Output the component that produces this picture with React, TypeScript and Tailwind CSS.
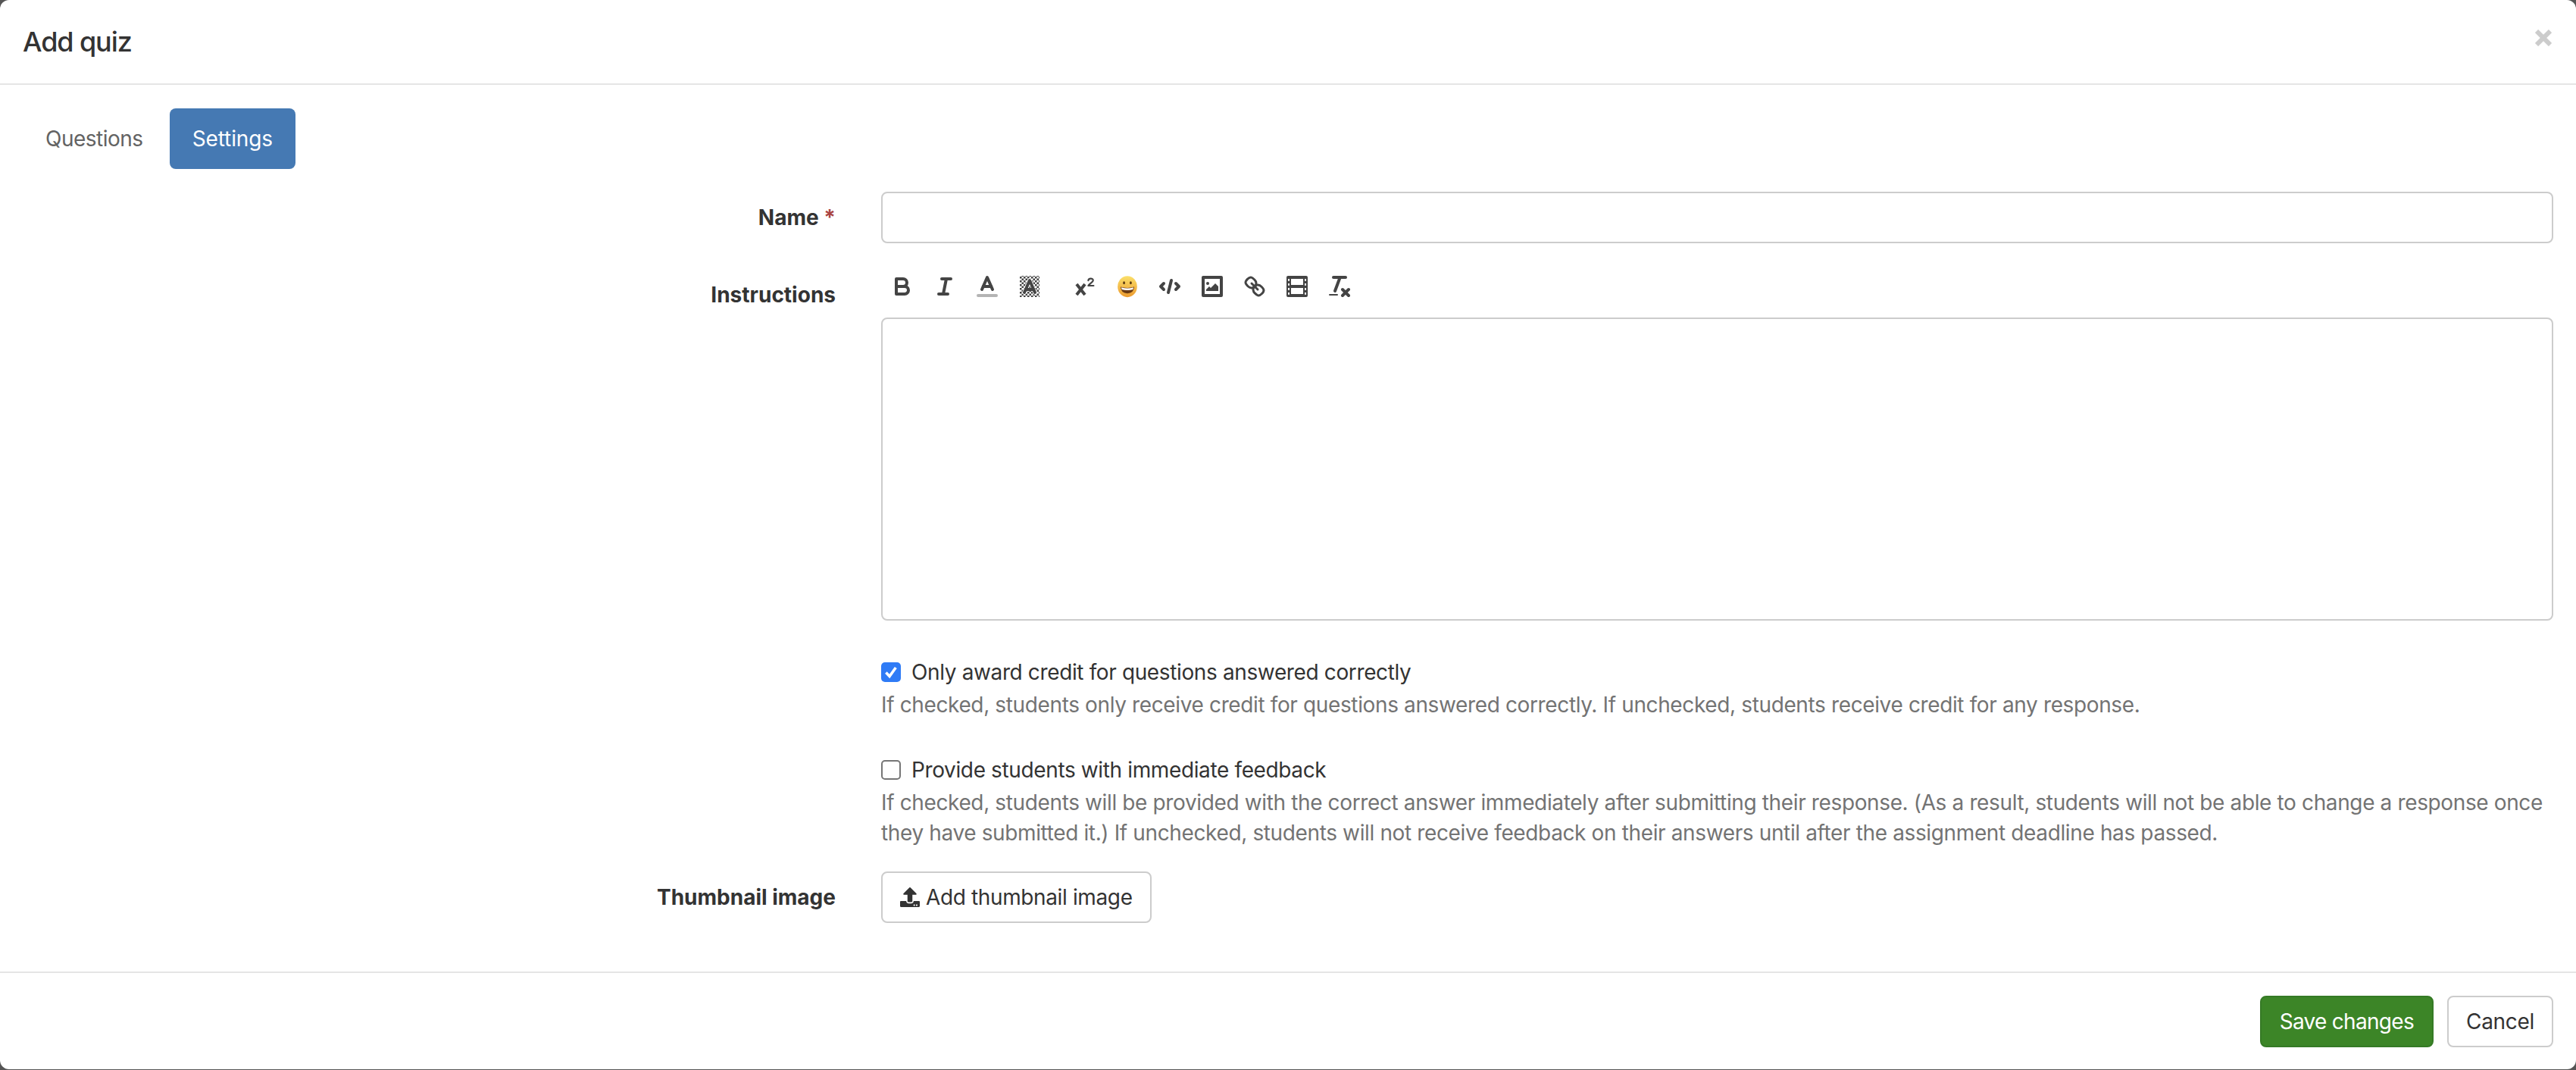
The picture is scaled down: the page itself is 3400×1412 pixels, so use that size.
import { FaUpload } from 'react-icons/fa';

const font = "font-['Inter','Noto_Sans',sans-serif]";

const Bold = () => (
  <>
    <path d="M5,4H9.5A2.5,2.5,0,0,1,12,6.5v0A2.5,2.5,0,0,1,9.5,9H5A0,0,0,0,1,5,9V4A0,0,0,0,1,5,4Z" />
    <path d="M5,9h5.5A2.5,2.5,0,0,1,13,11.5v0A2.5,2.5,0,0,1,10.5,14H5a0,0,0,0,1,0,0V9A0,0,0,0,1,5,9Z" />
  </>
);

const Italic = () => (
  <>
    <line x1="7" x2="13" y1="4" y2="4" />
    <line x1="5" x2="11" y1="14" y2="14" />
    <line x1="8" x2="10" y1="14" y2="4" />
  </>
);

const Color = () => (
  <>
    <line x1="3" x2="15" y1="15" y2="15" opacity="0.4" />
    <polyline points="5.5 11 9 3 12.5 11" />
    <line x1="11.63" x2="6.38" y1="9" y2="9" />
  </>
);

const Background = () => (
  <>
    <defs>
      <pattern id="checker" width="2.5" height="2.5" patternUnits="userSpaceOnUse">
        <rect width="1.25" height="1.25" fill="#444" stroke="none" />
        <rect x="1.25" y="1.25" width="1.25" height="1.25" fill="#444" stroke="none" />
      </pattern>
    </defs>
    <rect x="2.5" y="2" width="13" height="14" fill="url(#checker)" stroke="none" />
    <polyline points="5.5 13 9 5 12.5 13" stroke="#fff" strokeWidth="2.8" />
    <polyline points="5.5 13 9 5 12.5 13" />
    <line x1="11.63" x2="6.38" y1="11" y2="11" />
  </>
);

const Script = () => (
  <>
    <path d="M3.5 7.5 L9 14.5 M9 7.5 L3.5 14.5" strokeLinecap="butt" />
    <path d="M11.2 5.1 C11.3 3.4 14.4 3.3 14.4 5 C14.4 6.3 12 7 11.2 8.5 H14.7" strokeWidth="1.1" />
  </>
);

const Emoji = () => (
  <>
    <defs>
      <linearGradient id="face" x1="0" x2="0" y1="0" y2="1">
        <stop offset="0" stopColor="#fbe06a" />
        <stop offset="1" stopColor="#ec9a2e" />
      </linearGradient>
    </defs>
    <ellipse cx="9" cy="9.1" rx="6.4" ry="7" fill="url(#face)" stroke="none" />
    <ellipse cx="6.8" cy="6.6" rx="0.7" ry="1" fill="#5a3a12" stroke="none" />
    <ellipse cx="11.2" cy="6.6" rx="0.7" ry="1" fill="#5a3a12" stroke="none" />
    <path d="M4.5 9.3 Q9 10.6 13.5 9.3 Q13.2 13.6 9 13.6 Q4.8 13.6 4.5 9.3 Z" fill="#6b3a12" stroke="none" />
    <path d="M5 9.6 Q9 10.8 13 9.6 L12.7 11 Q9 11.9 5.3 11 Z" fill="#fff" stroke="none" />
  </>
);

const Code = () => (
  <>
    <polyline points="5 7 3 9 5 11" />
    <polyline points="13 7 15 9 13 11" />
    <line x1="10" x2="8" y1="5" y2="13" />
  </>
);

const ImageIcon = () => (
  <>
    <rect x="3" y="3" width="12" height="12" />
    <circle cx="6" cy="7" r="1" fill="#444" stroke="none" />
    <polyline points="5 12 5 11 7 9 8 10 11 7 13 9 13 12 5 12" fill="#444" stroke="none" />
  </>
);

const LinkIcon = () => (
  <g strokeWidth="1.5">
    <line x1="7" x2="11" y1="7" y2="11" />
    <path d="M8.9,4.577a3.476,3.476,0,0,1,.36,4.679A3.476,3.476,0,0,1,4.577,8.9C3.185,7.5,2.035,6.4,4.217,4.217S7.5,3.185,8.9,4.577Z" />
    <path d="M13.423,9.1a3.476,3.476,0,0,0-4.679-.36,3.476,3.476,0,0,0,.36,4.679c1.392,1.392,2.5,2.542,4.679.36S14.815,10.5,13.423,9.1Z" />
  </g>
);

const Video = () => (
  <>
    <rect x="2" y="2" width="14" height="14" rx="1" fill="#444" stroke="none" />
    <rect x="5" y="4" width="8" height="4" fill="#fff" stroke="none" />
    <rect x="5" y="10" width="8" height="4" fill="#fff" stroke="none" />
    <rect x="3" y="4" width="1" height="1.4" fill="#fff" stroke="none" />
    <rect x="3" y="7" width="1" height="1.4" fill="#fff" stroke="none" />
    <rect x="3" y="10" width="1" height="1.4" fill="#fff" stroke="none" />
    <rect x="3" y="13" width="1" height="1.4" fill="#fff" stroke="none" />
    <rect x="14" y="4" width="1" height="1.4" fill="#fff" stroke="none" />
    <rect x="14" y="7" width="1" height="1.4" fill="#fff" stroke="none" />
    <rect x="14" y="10" width="1" height="1.4" fill="#fff" stroke="none" />
    <rect x="14" y="13" width="1" height="1.4" fill="#fff" stroke="none" />
  </>
);

const Clean = () => (
  <>
    <line x1="5" x2="13" y1="3" y2="3" />
    <line x1="6" x2="9.35" y1="12" y2="3" />
    <line x1="11" x2="15" y1="11" y2="15" />
    <line x1="15" x2="11" y1="11" y2="15" />
    <rect x="2" y="14" width="6" height="1" rx="0.5" fill="#444" stroke="none" />
  </>
);

const ToolButton = ({ children }: { children: React.ReactNode }) => (
  <span className="flex h-[48px] w-[56px] items-center justify-center">
    <svg
      viewBox="0 0 18 18"
      className="h-[36px] w-[36px]"
      fill="none"
      stroke="#444"
      strokeWidth="2"
      strokeLinecap="round"
      strokeLinejoin="round"
    >
      {children}
    </svg>
  </span>
);

const Field = ({ label, required, labelClass = 'pt-[14px]', children }: { label: string; required?: boolean; labelClass?: string; children: React.ReactNode }) => (
  <div className="grid grid-cols-[1103px_1fr] gap-x-[60px]">
    <label className={`${labelClass} text-right text-[28px] leading-[40px] font-bold text-[#333]`}>
      {label}
      {required && <span className="text-[#a94442]"> *</span>}
    </label>
    <div>{children}</div>
  </div>
);

const CheckOption = ({ checked, label, help }: { checked?: boolean; label: string; help: string }) => (
  <div>
    <div className="flex items-center gap-[14px] leading-[40px]">
      {checked ? (
        <span className="flex h-[26px] w-[26px] items-center justify-center rounded-[5px] bg-[#2f7bf6]">
          <svg viewBox="0 0 16 16" className="h-[22px] w-[22px]" fill="none" stroke="#fff" strokeWidth="2.6">
            <path d="M3.2 8.4 L6.6 12 L12.6 3.6" />
          </svg>
        </span>
      ) : (
        <span className="h-[26px] w-[26px] rounded-[5px] border-2 border-[#767676] bg-white" />
      )}
      <span className="text-[28px] tracking-[-0.37px] text-[#333]">{label}</span>
    </div>
    <p className="mt-[3px] text-[28px] leading-[40px] tracking-[-0.37px] text-[#737373]">{help}</p>
  </div>
);

export default function App() {
  return (
    <div className={`${font} h-[1412px] w-full overflow-hidden bg-[#555]`}>
      <div className="flex h-[1411px] flex-col rounded-[12px] bg-white">
        <header className="flex h-[112px] shrink-0 items-center justify-between border-b-2 border-[#e5e5e5] pr-[32px] pl-[30px]">
          <h1 className="text-[36px] leading-[50px] font-medium tracking-[-1.1px] text-[#333]">Add quiz</h1>
          <svg viewBox="0 0 22 22" className="mb-[10px] h-[22px] w-[22px]" stroke="#ccc" strokeWidth="6">
            <path d="M2 2 L20 20 M20 2 L2 20" />
          </svg>
        </header>

        <main className="flex flex-1 flex-col pt-[31px] pr-[30px]">
          <nav className="flex gap-[5px] pl-[30px]">
            <a className="flex h-[80px] items-center px-[30px] text-[28px] tracking-[-0.5px] text-[#636363]">Questions</a>
            <a className="flex h-[80px] items-center rounded-[8px] bg-[#4579b3] px-[30px] text-[28px] tracking-[-0.1px] text-white">Settings</a>
          </nav>

          <div className="mt-[30px] flex flex-col">
            <Field label="Name" required>
              <input className="block h-[68px] w-full rounded-[8px] border-2 border-[#ccc] bg-white px-[24px] text-[28px]" />
            </Field>

            <div className="mt-[30px]">
              <Field label="Instructions" labelClass="pt-[18px]">
                <div className="flex h-[68px] items-center pb-[14px]">
                  <div className="flex">
                    <ToolButton><Bold /></ToolButton>
                    <ToolButton><Italic /></ToolButton>
                    <ToolButton><Color /></ToolButton>
                    <ToolButton><Background /></ToolButton>
                  </div>
                  <div className="ml-[17px] flex">
                    <ToolButton><Script /></ToolButton>
                    <ToolButton><Emoji /></ToolButton>
                    <ToolButton><Code /></ToolButton>
                    <ToolButton><ImageIcon /></ToolButton>
                    <ToolButton><LinkIcon /></ToolButton>
                    <ToolButton><Video /></ToolButton>
                    <ToolButton><Clean /></ToolButton>
                  </div>
                </div>
                <div className="h-[400px] rounded-[8px] border-2 border-[#ccc]" />
              </Field>
            </div>

            <div className="mt-[48px] grid grid-cols-[1103px_1fr] gap-x-[60px]">
              <div />
              <div className="flex flex-col gap-[46px]">
                <CheckOption
                  checked
                  label="Only award credit for questions answered correctly"
                  help="If checked, students only receive credit for questions answered correctly. If unchecked, students receive credit for any response."
                />
                <CheckOption
                  label="Provide students with immediate feedback"
                  help="If checked, students will be provided with the correct answer immediately after submitting their response. (As a result, students will not be able to change a response once they have submitted it.) If unchecked, students will not receive feedback on their answers until after the assignment deadline has passed."
                />
              </div>
            </div>

            <div className="mt-[31px]">
              <Field label="Thumbnail image">
                <button className="flex h-[68px] items-center gap-[8px] rounded-[8px] border-2 border-[#ccc] bg-white px-[23px] text-[28px] tracking-[-0.37px] text-[#333]">
                  <FaUpload className="h-[26px] w-[26px]" />
                  Add thumbnail image
                </button>
              </Field>
            </div>
          </div>
        </main>

        <footer className="flex h-[129px] shrink-0 items-center justify-end gap-[18px] border-t-2 border-[#e5e5e5] pr-[30px]">
          <button className="h-[68px] rounded-[8px] border-2 border-[#357a25] bg-[#3c8527] px-[24px] text-[28px] tracking-[-0.7px] text-white">Save changes</button>
          <button className="h-[68px] w-[140px] rounded-[8px] border-2 border-[#ccc] bg-white text-[28px] tracking-[-0.3px] text-[#333]">Cancel</button>
        </footer>
      </div>
    </div>
  );
}
